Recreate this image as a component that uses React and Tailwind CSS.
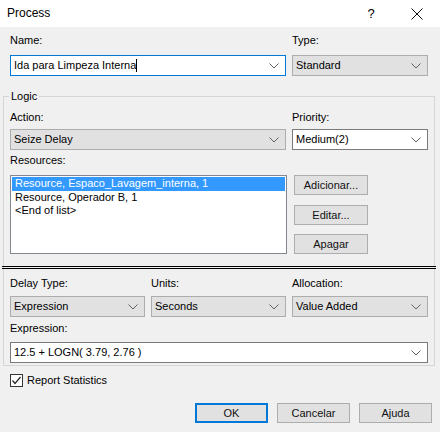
import React from 'react';

const Chevron = () => (
  <svg width="10" height="6" viewBox="0 0 10 6" className="shrink-0">
    <polyline points="0.5,0.5 5,5 9.5,0.5" fill="none" stroke="#606060" strokeWidth="1" />
  </svg>
);

function Combo({ value, white, focused, caret, className = '' }) {
  const look = focused
    ? 'bg-white border-[#0078d7]'
    : white
    ? 'bg-white border-[#7a7a7a]'
    : 'bg-[#e1e1e1] border-[#adadad]';
  return (
    <div className={`h-[21px] border flex items-center justify-between pl-[3px] pr-[6px] ${look} ${className}`}>
      <span className="flex items-center whitespace-nowrap">
        {value}
        {caret && <span className="inline-block w-px h-[13px] bg-black" />}
      </span>
      <Chevron />
    </div>
  );
}

function Btn({ children, primary, className = '' }) {
  return (
    <button
      className={`h-[20px] bg-[#e1e1e1] flex items-center justify-center font-normal text-[#111] ${
        primary ? 'border-2 border-[#0078d7]' : 'border border-[#adadad]'
      } ${className}`}
    >
      {children}
    </button>
  );
}

export default function App() {
  const resources = ['Resource, Espaco_Lavagem_interna, 1', 'Resource, Operador B, 1', '<End of list>'];

  return (
    <div className="w-[440px] h-[432px] bg-[#f0f0f0] text-[11px] leading-[13px] text-black overflow-hidden" style={{ fontFamily: '"Liberation Sans", Arial, sans-serif' }}>
      {/* title bar */}
      <div className="h-[27px] bg-white flex items-center justify-between">
        <span className="pl-[7px] text-[12px]">Process</span>
        <div className="flex items-center">
          <span className="text-[13px] w-[46px] text-center">?</span>
          <svg width="46" height="12" viewBox="0 0 46 12">
            <path d="M17.5 0.5 L28.5 11.5 M28.5 0.5 L17.5 11.5" stroke="#111" strokeWidth="1" />
          </svg>
        </div>
      </div>

      {/* name / type */}
      <div className="px-[10px] pt-[7px] grid grid-cols-[276px_136px] gap-x-[6px]">
        <span>Name:</span>
        <span>Type:</span>
        <Combo className="mt-[8px]" value="Ida para Limpeza Interna" focused caret />
        <Combo className="mt-[8px]" value="Standard" />
      </div>

      {/* logic group */}
      <fieldset className="mx-[3px] mt-[14px] w-[432px] border border-[#d5d5d5] px-[6px] pb-[2px]">
        <legend className="-ml-[1px] px-[2px]">Logic</legend>
        <div className="grid grid-cols-[276px_136px] gap-x-[6px] mt-[8px]">
          <span>Action:</span>
          <span>Priority:</span>
          <Combo className="mt-[5px]" value="Seize Delay" />
          <Combo className="mt-[5px]" value="Medium(2)" white />
        </div>
        <div className="mt-[4px]">Resources:</div>
        <div className="flex gap-x-[7px] mt-[8px]">
          <div className="w-[277px] h-[79px] bg-white border border-[#828790] p-px">
            {resources.map((r, i) => (
              <div
                key={r}
                className={`h-[13px] pl-[3px] ${i === 0 ? 'bg-[#3399ff] text-white h-[14px]' : ''}`}
              >
                {r}
              </div>
            ))}
          </div>
          <div className="flex flex-col gap-y-[10px]">
            <Btn className="w-[74px]">Adicionar...</Btn>
            <Btn className="w-[74px]">Editar...</Btn>
            <Btn className="w-[74px] -mt-px">Apagar</Btn>
          </div>
        </div>

        {/* double separator */}
        <div className="-mx-[8px] mt-[12px] h-[3px] border-y border-black" />

        <div className="grid grid-cols-[135px_135px_136px] gap-x-[6px] mt-[8px]">
          <span>Delay Type:</span>
          <span>Units:</span>
          <span>Allocation:</span>
          <Combo className="mt-[6px]" value="Expression" />
          <Combo className="mt-[6px]" value="Seconds" />
          <Combo className="mt-[6px]" value="Value Added" />
        </div>
        <div className="mt-[5px]">Expression:</div>
        <Combo className="mt-[7px] w-[418px]" value="12.5 + LOGN( 3.79, 2.76 )" white />
      </fieldset>

      {/* report statistics */}
      <div className="flex items-center gap-x-[4px] px-[10px] mt-[8px]">
        <div className="w-[13px] h-[13px] border border-[#333] bg-white flex items-center justify-center">
          <svg width="11" height="11" viewBox="0 0 11 11">
            <polyline points="1.5,5.5 4,8.5 9.5,2" fill="none" stroke="#222" strokeWidth="1.2" />
          </svg>
        </div>
        <span>Report Statistics</span>
      </div>

      {/* dialog buttons */}
      <div className="flex justify-end gap-x-[9px] pr-[8px] mt-[16px]">
        <Btn primary className="w-[73px]">OK</Btn>
        <Btn className="w-[73px]">Cancelar</Btn>
        <Btn className="w-[73px]">Ajuda</Btn>
      </div>
    </div>
  );
}
